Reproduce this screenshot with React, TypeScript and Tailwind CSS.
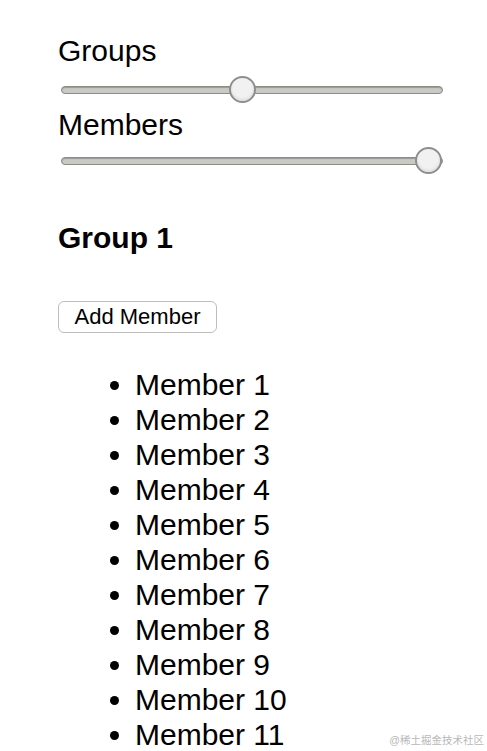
import React from "react";

function Slider({ thumbLeft }: { thumbLeft: "mid" | "end" }) {
  return (
    <div className="relative h-[27px] w-[383px] ml-[60px]">
      <div className="absolute left-[1px] right-0 top-[10px] h-[8px] rounded-full border border-[#8d8d82] bg-[#c9c9c6] shadow-[inset_0_1px_1px_rgba(0,0,0,0.25)]" />
      <div
        className={
          thumbLeft === "mid"
            ? "absolute top-0 left-[169px] w-[27px] h-[27px] rounded-full border-2 border-[#8e8e8e] bg-[#f1f1f1] shadow-[inset_0_-2px_3px_rgba(0,0,0,0.08)]"
            : "absolute top-0 left-[355px] w-[27px] h-[27px] rounded-full border-2 border-[#8e8e8e] bg-[#f1f1f1] shadow-[inset_0_-2px_3px_rgba(0,0,0,0.08)]"
        }
      />
    </div>
  );
}

export default function App() {
  const members = Array.from({ length: 11 }, (_, i) => `Member ${i + 1}`);
  return (
    <div
      className="relative w-[487px] h-[751px] overflow-hidden bg-white text-black"
      style={{ fontFamily: '"Liberation Sans", Arial, Helvetica, sans-serif' }}
    >
      <div className="pt-[33px]">
        <div className="pl-[58px] text-[30px] leading-[35px]">Groups</div>
        <div className="mt-[8px]">
          <Slider thumbLeft="mid" />
        </div>
        <div className="mt-[4px] pl-[58px] text-[30px] leading-[35px]">Members</div>
        <div className="mt-[5px]">
          <Slider thumbLeft="end" />
        </div>
        <div className="mt-[46px] pl-[58px] text-[30px] leading-[35px] font-bold">Group 1</div>
        <div className="mt-[46px] pl-[58px]">
          <button className="h-[32px] w-[159px] rounded-[6px] border border-[#bdbdbd] bg-white text-[22px] leading-[30px] text-black">
            Add Member
          </button>
        </div>
        <ul className="mt-[34px] list-disc pl-[135px] text-[30px] leading-[35px]">
          {members.map((m) => (
            <li key={m}>{m}</li>
          ))}
        </ul>
      </div>
      <div
        className="absolute right-[3px] bottom-[5px] text-[10.5px] leading-[12px] text-[#b8b8b8]"
        style={{ fontFamily: '"Liberation Sans", "Noto Sans CJK SC", sans-serif' }}
      >
        @稀土掘金技术社区
      </div>
    </div>
  );
}
